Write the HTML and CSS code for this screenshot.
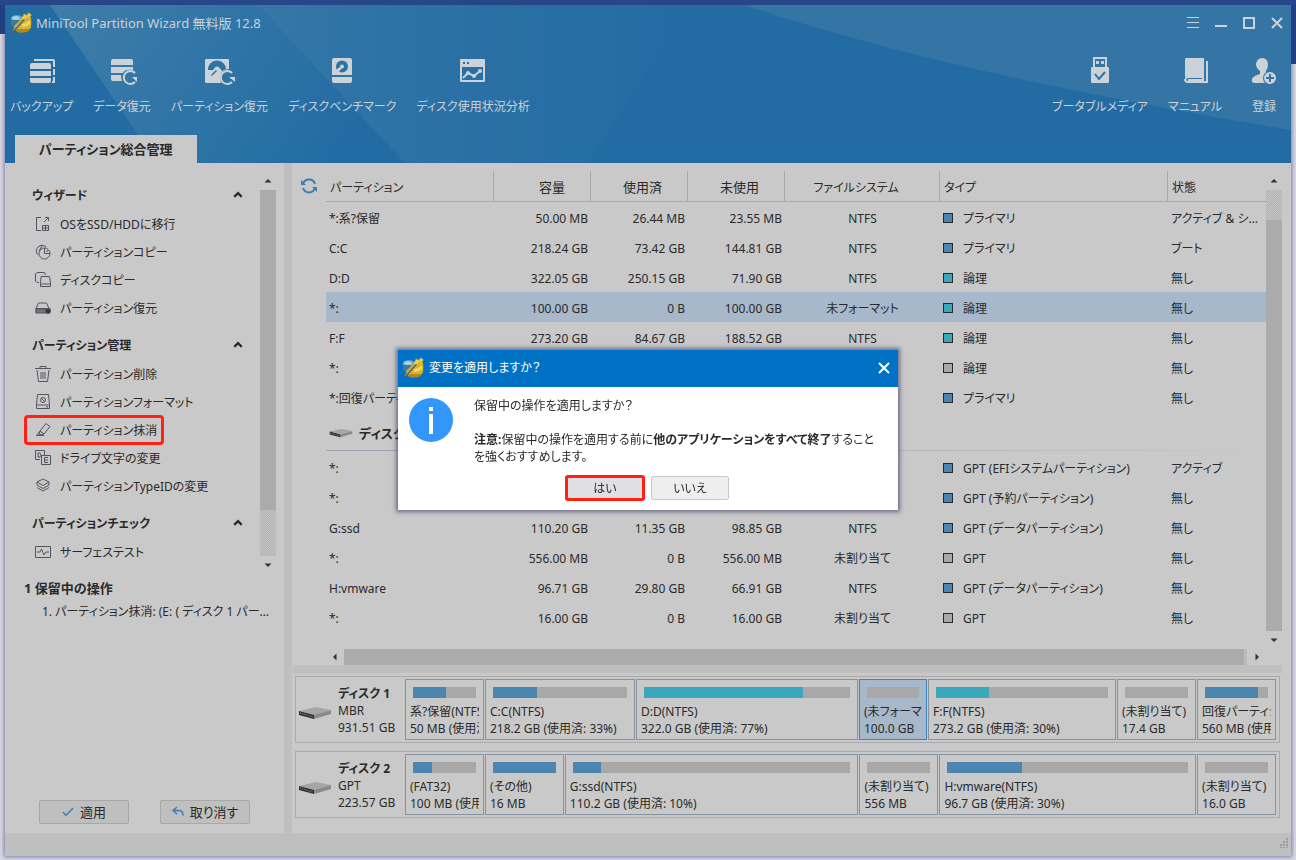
FILE: index.html
```html
<!DOCTYPE html>
<html lang="ja">
<head>
<meta charset="utf-8">
<title>MiniTool Partition Wizard</title>
<link rel="stylesheet" href="styles.css">
</head>
<body>
<svg class="defs" aria-hidden="true">
  <defs>
    <symbol id="app" viewBox="0 0 22 22">
      <ellipse cx="7" cy="7" rx="6.500" ry="4" fill="#4f9fc4"/><ellipse cx="6" cy="6" rx="4" ry="2" fill="#a5d2e4"/>
      <path d="M1 8v5q3 4 8 3V8z" fill="#3f7890"/>
      <path d="M4 14q4-3 8-9l3-2h5q2 5 1 12-1 4-8 4-6 1-8-1z" fill="#d9b12a"/>
      <path d="M12 12q5-1 8-4v4q-3 3-8 3z" fill="#f0d765"/><path d="M6 17h13v2q-6 3-12 1z" fill="#b28b17"/>
      <path d="M2 20.500 16 5" stroke="#515c60" stroke-width="2"/><path d="M3 18.500 15 5" stroke="#c3cdd2" stroke-width=".8"/>
      <path d="m14 1 1 2 2-1-1 2 2 1-2 1v2l-2-1-2 1 1-2-2-1h2zM19 0l1 2 2 1-2 1-1 2-1-2-1-1 1-1z" fill="#f2ce48"/>
    </symbol>
    <symbol id="drive" viewBox="0 0 34 14">
      <path d="M1 5 18 1l15 3-17 5z" fill="#a6a6a6"/><path d="m16 9 17-5v4l-17 5z" fill="#8a8a8a"/>
      <path d="M1 5v4l15 4V9z" fill="#2c2c30"/><path d="m2 7 13 4" stroke="#8f7a7a" stroke-width="1.500" stroke-dasharray="1 1"/>
    </symbol>
    <symbol id="up" viewBox="0 0 8 5"><path d="m.5 4.500 3.500-3.500 3.500 3.500z" fill="#333"/></symbol>
    <symbol id="down" viewBox="0 0 8 5"><path d="m.5.5 3.500 3.500 3.500-3.500z" fill="#333"/></symbol>
    <symbol id="left" viewBox="0 0 5 8"><path d="M4.500.500 1 4l3.500 3.500z" fill="#333"/></symbol>
    <symbol id="right" viewBox="0 0 5 8"><path d="m.5.5 3.500 3.500L.500 7.500z" fill="#333"/></symbol>
    <symbol id="fold" viewBox="0 0 8 6"><path d="m1 4.500 3-3 3 3" fill="none" stroke="#2a2a2a" stroke-width="1.800"/></symbol>
  </defs>
</svg>

<div class="window">
  <header class="banner">
    <svg class="facets" viewBox="0 0 1286 158" preserveAspectRatio="none" aria-hidden="true">
      <defs>
        <linearGradient id="g1" x1="0" x2="1" y1="0" y2=".3"><stop offset="0" stop-color="#3f7da9"/><stop offset=".6" stop-color="#2d73a6"/><stop offset="1" stop-color="#236ca3"/></linearGradient>
        <linearGradient id="g2"><stop offset="0" stop-color="#3477a7"/><stop offset=".5" stop-color="#2a70a5"/><stop offset="1" stop-color="#236ca3"/></linearGradient>
      </defs>
      <path d="M45 0h208l147 158H152z" fill="url(#g1)"/>
      <path d="M253 0h430l-100 158H400z" fill="url(#g2)"/>
      <path d="M740 0q200 68 546 125V0z" fill="#3475a6"/>
    </svg>
    <div class="titlebar">
      <svg class="app-icon"><use href="#app"/></svg>
      <h1>MiniTool Partition Wizard 無料版 12.8</h1>
      <div class="window-buttons">
        <button aria-label="メニュー"><svg viewBox="0 0 12 12"><path d="M0 .5h12M0 5.500h12M0 10.500h12" stroke="currentColor"/></svg></button>
        <button aria-label="最小化"><svg viewBox="0 0 12 12"><path d="M0 9h12" stroke="currentColor" stroke-width="2"/></svg></button>
        <button aria-label="最大化"><svg viewBox="0 0 12 12"><path d="M1 1h10v10H1z" fill="none" stroke="currentColor" stroke-width="2"/></svg></button>
        <button aria-label="閉じる"><svg viewBox="0 0 12 12"><path d="m1 1 10 10M11 1 1 11" stroke="currentColor" stroke-width="2"/></svg></button>
      </div>
    </div>
    <div class="toolbar">
      <button><svg viewBox="0 0 28 28"><path d="M4 6h17q2 0 2 2v4H2V8q0-2 2-2zM2 14h21v5H2zm0 7h21v3q0 2-2 2H4q-2 0-2-2z"/><path d="M6 3h19q1 0 1 1v6M26 12v6M26 20v5h-2" fill="none" stroke="currentColor" stroke-width="2"/></svg><span>バックアップ</span></button>
      <button><svg viewBox="0 0 28 28"><path d="M3 4q0-2 2-2h18q2 0 2 2v4H3zm0 6h22v3q-8-1-10 3H3zm0 8h10q0 3 1 6H5q-2 0-2-2z"/><path d="M27 16a6.500 6.500 0 1 0 0 9" fill="none" stroke="currentColor" stroke-width="2"/><path d="M24 20h5v5z"/></svg><span>データ復元</span></button>
      <button><svg viewBox="0 0 28 28"><path d="M1 2h22q1 0 1 1v9q-8 1-9 7l1 7H1q-1 0-1-1V3q0-1 1-1z"/><path d="M3 13a9 9 0 0 1 18-1l-4 2a5 5 0 0 0-9-1z" fill="#2d73a6"/><circle cx="12" cy="12" r="2.500"/><path d="m12 14-5 5-1-1 5-5z" fill="#2d73a6"/><path d="M27 16a6.500 6.500 0 1 0 0 9" fill="none" stroke="currentColor" stroke-width="2"/><path d="M24 20h6v5z"/></svg><span>パーティション復元</span></button>
      <button><svg viewBox="0 0 28 28"><path d="M6 1h16q2 0 2 2v15H4V3q0-2 2-2zM4 20h20v4q0 2-2 2H6q-2 0-2-2z"/><circle cx="14" cy="9.500" r="6" fill="#2a71a6"/><circle cx="14" cy="9.500" r="2"/><path d="m13 9-6 5 2 3 5-6z"/></svg><span>ディスクベンチマーク</span></button>
      <button><svg viewBox="0 0 28 28"><path fill-rule="evenodd" d="M2 2h23q1 0 1 1v21q0 1-1 1H2q-1 0-1-1V3q0-1 1-1zm2 3v2h2V5zm4 0v2h2V5zM3 10v13h21V10z"/><path d="m4 21 5-5 6 3 6-5" fill="none" stroke="currentColor" stroke-width="2"/><circle cx="9" cy="16" r="2"/><circle cx="15" cy="19" r="2"/><circle cx="21" cy="14" r="2"/></svg><span>ディスク使用状況分析</span></button>
      <div class="spacer"></div>
      <button><svg viewBox="0 0 28 28"><path fill-rule="evenodd" d="M7 0h14v10h1q1 0 1 1v14q0 1-1 1H6q-1 0-1-1V11q0-1 1-1h1zm2 2v8h10V2z"/><path d="M10 4h3v3h-3zm5 0h3v3h-3z"/><path d="m9 17 4 5 6-7" fill="none" stroke="#2e73a6" stroke-width="2"/></svg><span>ブータブルメディア</span></button>
      <button><svg viewBox="0 0 28 28"><path d="M5 1h18v18H7q-3 0-3 3V3q0-2 1-2z"/><path d="M5 22q0-2 2-2h15v3H7M26 4v21H7q-3 0-3-3" fill="none" stroke="currentColor" stroke-width="2"/></svg><span>マニュアル</span></button>
      <button class="register"><svg viewBox="0 0 28 28"><path d="M12 1q6 0 6 7 0 3-2 6v3q-2 6 2 9H4q-3-1-2-4 1-3 8-5v-3q-4-3-4-7 1-6 6-6z"/><circle cx="20" cy="21" r="7" fill="#3475a6"/><path fill-rule="evenodd" d="M20 15a6 6 0 1 1 0 12 6 6 0 0 1 0-12zm-1 2v3h-3v2h3v3h2v-3h3v-2h-3v-3z"/></svg><span>登録</span></button>
    </div>
    <div class="tabs"><button class="tab">パーティション総合管理</button></div>
  </header>

  <div class="workspace">
    <aside class="sidebar">
      <div class="actions">
        <nav class="groups">
          <section>
            <h2>ウィザード <svg><use href="#fold"/></svg></h2>
            <button class="action"><svg viewBox="0 0 16 16"><path d="M6 1.500H1.500v13H6M9 6l4-4M10 1.500h3.500V5M7.500 9.500h6v5h-6zM7.500 12h6M10.500 9.500v5"/></svg>OSをSSD/HDDに移行</button>
            <button class="action"><svg viewBox="0 0 16 16"><circle cx="9.500" cy="9.500" r="5.500"/><path d="M9.500 4v5.500H15M3 11a5 5 0 1 1 8-8M4 7l3-5M11 7h2"/></svg>パーティションコピー</button>
            <button class="action"><svg viewBox="0 0 16 16"><path d="M4 10.500H2L.500 9V2L2 .500h7.500L10.500 3M6 4.500h8.500L15.500 11v3.500h-10v-3zM6 12h9"/></svg>ディスクコピー</button>
            <button class="action"><svg viewBox="0 0 16 16"><path d="M1 8.500 3.500 3h8L14 8.500M1 8.500h14v4H1z"/><path d="M1 9h13v4H1z" fill="#777"/><circle cx="13" cy="11" r="2.500" fill="#333"/></svg>パーティション復元</button>
          </section>
          <section>
            <h2>パーティション管理 <svg><use href="#fold"/></svg></h2>
            <button class="action"><svg viewBox="0 0 16 16"><path d="M0 2.500h16M5 2V.500h6V2M2 4l1.500 11.500h9L14 4M6 6v7M8 6v7M10 6v7"/></svg>パーティション削除</button>
            <button class="action"><svg viewBox="0 0 16 16"><path d="M2.500.500h11l1 10v4h-13v-4zM1.500 11h13M11 13h2"/><circle cx="8" cy="6" r="2.500"/><path d="m6 4 4 4"/></svg>パーティションフォーマット</button>
            <button class="action marked"><svg viewBox="0 0 16 16"><path d="M5 9 11 1.500l4 3L9 12l-5 1zM1 13.500h8M5 9l4 3M2 13l3-4"/></svg>パーティション抹消</button>
            <button class="action"><svg viewBox="0 0 16 16"><path d="M5 9.500H.500v-9h9V5M3 3v4h2q2-2 0-4zM6.500 5.500h9v9h-9zM13 7.500H9.500v5H13M9.500 10H13"/></svg>ドライブ文字の変更</button>
            <button class="action"><svg viewBox="0 0 16 16"><path d="m8 1 6 3-6 3.500L2 4zM2 7l6 3.500L14 7M2 9.500 8 13l6-3.500M2 4v3M14 4v3"/></svg>パーティションTypeIDの変更</button>
          </section>
          <section>
            <h2>パーティションチェック <svg><use href="#fold"/></svg></h2>
            <button class="action"><svg viewBox="0 0 16 16"><path d="M.500 2.500h15v11H.500zM2 8h3l1.500-3L9 11l2-3h3"/></svg>サーフェステスト</button>
          </section>
        </nav>
        <div class="vscroll" aria-hidden="true">
          <svg><use href="#up"/></svg>
          <i class="thumb nav-thumb"></i><i class="trough nav-rest"></i>
          <svg><use href="#down"/></svg>
        </div>
      </div>
      <section class="pending">
        <h2>1 保留中の操作</h2>
        <ol><li>1. パーティション抹消: (E: ( ディスク 1 パーティション 4 )</li></ol>
      </section>
      <div class="commit">
        <button><svg viewBox="0 0 12 12"><path d="m1 6 3 3.500L11 2"/></svg>適用</button>
        <button><svg viewBox="0 0 12 12"><path d="M5 1 1 4.500 5 8M1 4.500h6q4 0 4 5"/></svg>取り消す</button>
      </div>
    </aside>

    <main class="content">
      <div class="listing">
        <button class="refresh" aria-label="更新"><svg viewBox="0 0 16 16"><path d="M2 6a6.300 6.300 0 0 1 12 0M14 10a6.300 6.300 0 0 1-12 0" fill="none" stroke="#3a7fb0" stroke-width="2"/><path d="M0 2v5h5zM16 14V9h-5z" fill="#3a7fb0"/></svg></button>
        <div class="table-wrap">
        <table>
          <colgroup><col class="c-name"><col class="c-num"><col class="c-num"><col class="c-num"><col class="c-fs"><col><col class="c-state"></colgroup>
          <thead><tr><th>パーティション</th><th class="num">容量</th><th class="num">使用済</th><th class="num">未使用</th><th class="fs-head">ファイルシステム</th><th>タイプ</th><th>状態</th></tr></thead>
          <tbody>
            <tr><td>*:系?保留</td><td>50.00 MB</td><td>26.44 MB</td><td>23.55 MB</td><td>NTFS</td><td><i class="sq blue"></i>プライマリ</td><td>アクティブ &amp; システム</td></tr>
            <tr><td>C:C</td><td>218.24 GB</td><td>73.42 GB</td><td>144.81 GB</td><td>NTFS</td><td><i class="sq blue"></i>プライマリ</td><td>ブート</td></tr>
            <tr><td>D:D</td><td>322.05 GB</td><td>250.15 GB</td><td>71.90 GB</td><td>NTFS</td><td><i class="sq teal"></i>論理</td><td>無し</td></tr>
            <tr class="selected"><td>*:</td><td>100.00 GB</td><td>0 B</td><td>100.00 GB</td><td>未フォーマット</td><td><i class="sq teal"></i>論理</td><td>無し</td></tr>
            <tr><td>F:F</td><td>273.20 GB</td><td>84.67 GB</td><td>188.52 GB</td><td>NTFS</td><td><i class="sq teal"></i>論理</td><td>無し</td></tr>
            <tr><td>*:</td><td></td><td></td><td></td><td></td><td><i class="sq gray"></i>論理</td><td>無し</td></tr>
            <tr><td>*:回復パーティション</td><td></td><td></td><td></td><td></td><td><i class="sq blue"></i>プライマリ</td><td>無し</td></tr>
            <tr class="disk-row"><th colspan="7" scope="rowgroup"><div><svg><use href="#drive"/></svg>ディスク 2</div></th></tr>
            <tr><td>*:</td><td></td><td></td><td></td><td></td><td><i class="sq blue"></i>GPT (EFIシステムパーティション)</td><td>アクティブ</td></tr>
            <tr><td>*:</td><td></td><td></td><td></td><td></td><td><i class="sq blue"></i>GPT (予約パーティション)</td><td>無し</td></tr>
            <tr><td>G:ssd</td><td>110.20 GB</td><td>11.35 GB</td><td>98.85 GB</td><td>NTFS</td><td><i class="sq blue"></i>GPT (データパーティション)</td><td>無し</td></tr>
            <tr><td>*:</td><td>556.00 MB</td><td>0 B</td><td>556.00 MB</td><td>未割り当て</td><td><i class="sq gray"></i>GPT</td><td>無し</td></tr>
            <tr><td>H:vmware</td><td>96.71 GB</td><td>29.80 GB</td><td>66.91 GB</td><td>NTFS</td><td><i class="sq blue"></i>GPT (データパーティション)</td><td>無し</td></tr>
            <tr><td>*:</td><td>16.00 GB</td><td>0 B</td><td>16.00 GB</td><td>未割り当て</td><td><i class="sq gray"></i>GPT</td><td>無し</td></tr>
          </tbody>
        </table>
        </div>
        <div class="vscroll" aria-hidden="true">
          <svg><use href="#up"/></svg>
          <i class="trough list-rest"></i><i class="thumb list-thumb"></i>
          <svg><use href="#down"/></svg>
        </div>
      </div>
      <div class="hscroll" aria-hidden="true">
        <svg><use href="#left"/></svg><i class="thumb"></i><i class="trough"></i><svg><use href="#right"/></svg>
      </div>
      <div class="divider"></div>
      <div class="maps">
        <section class="disk">
          <svg><use href="#drive"/></svg>
          <div class="disk-info"><h3>ディスク 1</h3><p>MBR</p><p>931.51 GB</p></div>
          <div class="parts">
            <div class="part" style="flex-grow:69"><div class="bar"><i class="blue" style="width:52%"></i></div><p>系?保留(NTFS)</p><p>50 MB (使用済: 52%)</p></div>
            <div class="part" style="flex-grow:140"><div class="bar"><i class="blue" style="width:33%"></i></div><p>C:C(NTFS)</p><p>218.2 GB (使用済: 33%)</p></div>
            <div class="part" style="flex-grow:212"><div class="bar"><i class="teal" style="width:77%"></i></div><p>D:D(NTFS)</p><p>322.0 GB (使用済: 77%)</p></div>
            <div class="part current" style="flex-grow:58"><div class="bar"></div><p>(未フォーマット)</p><p>100.0 GB</p></div>
            <div class="part" style="flex-grow:178"><div class="bar"><i class="teal" style="width:31%"></i></div><p>F:F(NTFS)</p><p>273.2 GB (使用済: 30%)</p></div>
            <div class="part" style="flex-grow:69"><div class="bar"></div><p>(未割り当て)</p><p>17.4 GB</p></div>
            <div class="part" style="flex-grow:69"><div class="bar"><i class="blue" style="width:84%"></i></div><p>回復パーティション</p><p>560 MB (使用済: 84%)</p></div>
          </div>
        </section>
        <section class="disk">
          <svg><use href="#drive"/></svg>
          <div class="disk-info"><h3>ディスク 2</h3><p>GPT</p><p>223.57 GB</p></div>
          <div class="parts">
            <div class="part" style="flex-grow:69"><div class="bar"><i class="blue" style="width:30%"></i></div><p>(FAT32)</p><p>100 MB (使用済: 30%)</p></div>
            <div class="part" style="flex-grow:69"><div class="bar"><i class="blue" style="width:100%"></i></div><p>(その他)</p><p>16 MB</p></div>
            <div class="part" style="flex-grow:284"><div class="bar"><i class="blue" style="width:10%"></i></div><p>G:ssd(NTFS)</p><p>110.2 GB (使用済: 10%)</p></div>
            <div class="part" style="flex-grow:69"><div class="bar"></div><p>(未割り当て)</p><p>556 MB</p></div>
            <div class="part" style="flex-grow:247"><div class="bar"><i class="blue" style="width:31%"></i></div><p>H:vmware(NTFS)</p><p>96.7 GB (使用済: 30%)</p></div>
            <div class="part" style="flex-grow:69"><div class="bar"></div><p>(未割り当て)</p><p>16.0 GB</p></div>
          </div>
        </section>
      </div>
    </main>
  </div>
  <footer class="status"><svg viewBox="0 0 10 10" aria-hidden="true"><path d="M8 0h2v2H8zM8 3h2v2H8zM5 3h2v2H5zM8 6h2v2H8zM5 6h2v2H5zM2 6h2v2H2zM8 9h2v1H8zM5 9h2v1H5zM2 9h2v1H2z" fill="#9a9aa4"/></svg></footer>
</div>

<dialog open aria-labelledby="dialog-title">
  <div class="dialog-head">
    <svg class="app-icon"><use href="#app"/></svg>
    <h2 id="dialog-title">変更を適用しますか？</h2>
    <button aria-label="閉じる"><svg viewBox="0 0 12 12"><path d="m1 1 10 10M11 1 1 11" stroke="currentColor" stroke-width="2"/></svg></button>
  </div>
  <div class="dialog-body">
    <svg class="info" viewBox="0 0 44 44"><circle cx="22" cy="22" r="22" fill="#3296fa"/><path d="M20 9h4v4h-4zM20 16h4v20h-4z" fill="#fff"/></svg>
    <div class="message">
      <p>保留中の操作を適用しますか？</p>
      <p><b>注意:</b>保留中の操作を適用する前に<b>他のアプリケーションをすべて終了</b>すること<br>を強くおすすめします。</p>
    </div>
  </div>
  <div class="dialog-buttons"><button class="yes">はい</button><button>いいえ</button></div>
</dialog>
</body>
</html>
```
FILE: styles.css
```css
* { box-sizing: border-box; }

body {
  margin: 0;
  padding: 5px;
  min-height: 100vh;
  display: flex;
  background: linear-gradient(#24498a 0 5px, transparent 5px), linear-gradient(90deg, transparent 50%, #1f4084 50%) 0 0 / 100% 64px no-repeat, linear-gradient(#1f4084 34px, #d8d8e2 34px);
  font: 12px/17px "Noto Sans", "Noto Sans CJK JP", sans-serif;
  font-feature-settings: "palt";
  color: #2a2a2a;
}

h1, h2, h3, p, ol { margin: 0; padding: 0; font-size: inherit; list-style: none; }
button { border: 0; padding: 0; background: none; color: inherit; font: inherit; font-feature-settings: inherit; }
svg { display: block; flex: none; }
.defs { position: absolute; width: 0; height: 0; }
.blue { background: #4b86b0; }
.teal { background: #3ba7bb; }
.gray { background: #a8a8a8; }
.app-icon { width: 22px; height: 22px; }

.window {
  flex: 1;
  min-width: 0;
  display: flex;
  flex-direction: column;
  background: #c9c9c9;
  box-shadow: 0 0 4px 1px rgba(60, 60, 130, .6);
}

/* Banner */
.banner {
  position: relative;
  display: flex;
  flex-direction: column;
  height: 158px;
  background: #236ca3;
  color: #cbd2d8;
}
.facets { position: absolute; inset: 0; width: 100%; height: 100%; }
.banner > div { position: relative; }
.titlebar { display: flex; align-items: center; gap: 4px; height: 36px; padding: 0 8px 0 5px; }
.titlebar h1 { flex: 1; font-size: 13px; font-weight: 400; }
.window-buttons { display: flex; gap: 16px; }
.window-buttons svg { width: 12px; height: 12px; }
.toolbar { display: flex; gap: 20px; padding: 16px 13px 0 5px; }
.toolbar button { display: flex; flex-direction: column; align-items: center; gap: 13px; }
.toolbar .register { margin-left: 8px; }
.toolbar svg { width: 28px; height: 28px; fill: currentColor; overflow: visible; }
.spacer { flex: 1; }
.tabs { display: flex; margin-top: auto; padding-left: 10px; }
.tab { height: 28px; padding: 0 24px; background: #c9c9c9; color: #2a2a2a; font-size: 13px; font-weight: 700; }

/* Layout */
.workspace { flex: 1; display: flex; min-height: 0; }
.sidebar { display: flex; flex-direction: column; width: 287px; flex: none; border-right: 8px solid #bfbfbf; }
.content { flex: 1; min-width: 0; }
.status { height: 23px; padding: 8px 3px; background: #bfbfbf; display: flex; justify-content: flex-end; align-items: flex-end; }
.status svg { width: 10px; height: 10px; }

/* Scrollbars */
.vscroll { display: flex; flex-direction: column; align-items: center; width: 16px; padding: 15px 0 6px; }
.vscroll svg { width: 8px; height: 5px; }
.vscroll svg:first-child { margin-bottom: 7px; }
.vscroll svg:last-child { margin-top: 7px; }
.vscroll i { width: 16px; }
.thumb { background: #ababab; }
.trough { background: repeating-conic-gradient(#b2b2b2 0 25%, #c4c4c4 0 50%) 0 0 / 2px 2px; }
.nav-thumb, .list-thumb { flex: 1; }
.nav-rest { height: 46px; }
.list-rest { height: 30px; }
.hscroll { display: flex; align-items: center; gap: 0; height: 16px; margin: 0 31px 0 40px; }
.hscroll svg { width: 5px; height: 8px; }
.hscroll i { height: 16px; }
.hscroll .thumb { flex: 1; margin-left: 7px; }
.hscroll .trough { width: 3px; margin-right: 8px; }

/* Sidebar */
.actions { display: flex; }
.groups { flex: 1; padding-top: 17px; }
.groups section { margin-bottom: 8px; }
.groups h2 { display: flex; align-items: center; justify-content: space-between; height: 30px; padding: 0 17px 0 27px; }
.groups h2 svg { width: 10px; height: 8px; }
.groups + .vscroll { margin-right: 8px; }
.action { display: flex; align-items: center; gap: 9px; height: 28px; margin-left: 20px; padding: 0 6px 0 10px; }
.action svg { width: 16px; height: 16px; fill: none; stroke: #55555f; }
.marked { outline: 3px solid #ff2212; outline-offset: -2px; border-radius: 3px; }
.pending { padding: 2px 8px 0 19px; line-height: 24px; }
.pending h2 { font-size: 13px; }
.pending li { width: 230px; margin-left: 18px; overflow: hidden; white-space: nowrap; text-overflow: ellipsis; }
.commit { display: flex; gap: 31px; margin-top: auto; padding: 0 34px 9px; }
.commit button { flex: 1; display: flex; align-items: center; justify-content: center; gap: 6px; height: 24px; border: 1px solid #a8a8a8; border-radius: 2px; background: #bfbfbf; font-size: 13px; }
.commit svg { width: 12px; height: 12px; fill: none; stroke: #3a7fb0; stroke-width: 1.5; }

/* Partition list */
.listing { display: flex; padding-right: 9px; }
.refresh { align-self: flex-start; padding: 15px 9px 0; }
.refresh svg { width: 16px; height: 16px; }
.table-wrap { flex: 1; min-width: 0; padding: 8px 0 17px; }
table { width: 100%; table-layout: fixed; border-collapse: separate; border-spacing: 0; }
.c-name { width: 168px; }
.c-num { width: 97px; }
.c-fs { width: 155px; }
.c-state { width: 98px; }
thead th { height: 31px; padding: 2px 4px 0; border-right: 1px solid #a8a8a8; border-bottom: 1px solid #a8a8a8; text-align: left; font-weight: 400; }
thead th:last-child { border-right: 0; }
thead .num { padding-right: 25px; text-align: right; font-size: 13px; }
thead .fs-head { text-align: center; padding-right: 16px; }
td { height: 30px; padding: 2px 3px 0; overflow: hidden; white-space: nowrap; text-overflow: ellipsis; }
td:nth-child(2), td:nth-child(3), td:nth-child(4) { text-align: right; }
td:nth-child(5) { text-align: center; }
td:last-child { padding-right: 8px; }
.selected { background: #a6b8ca; }
.sq { display: inline-block; width: 10px; height: 10px; margin-right: 10px; border: 1px solid #2a2a2a; vertical-align: 0; }
.disk-row th { padding: 2px 0 0; height: 40px; text-align: left; font-size: 13px; background: linear-gradient(90deg, #a3a3b3 30%, #c9c9c9) 0 38px / 100% 1px no-repeat; }
.disk-row div { display: flex; align-items: center; gap: 6px; padding-left: 3px; }
.disk-row svg { width: 24px; height: 12px; }

/* Disk maps */
.divider { height: 8px; margin: 0 9px 3px 1px; background: #bfbfbf; }
.maps { display: flex; flex-direction: column; gap: 8px; padding: 0 11px 15px 3px; }
.disk { display: flex; align-items: center; padding: 2px 3px 2px 2px; border: 1px solid #aaaab4; }
.disk > svg { width: 34px; height: 14px; margin-top: 6px; }
.disk-info { width: 73px; padding: 2px 0 0 6px; white-space: nowrap; }
.parts { flex: 1; min-width: 0; display: flex; gap: 1px; }
.part { flex: 1 1 0; min-width: 0; padding: 7px 4px 2px; border: 1px solid #8592a0; overflow: hidden; }
.part p { overflow: hidden; white-space: nowrap; }
.current { background: #a6b8ca; border-color: #3d85bb; }
.bar { display: flex; height: 11px; margin: 0 3px 5px; background: #a8a8a8; }

/* Dialog */
dialog {
  position: fixed;
  inset: 0;
  width: 500px;
  max-width: 100%;
  margin: auto;
  padding: 0;
  border: 0;
  background: #fff;
  color: #2a2a2a;
  box-shadow: 0 0 4px 2px rgba(60, 60, 110, .65);
}
.dialog-head { display: flex; align-items: center; gap: 5px; height: 37px; padding: 0 8px 2px 4px; background: #0072c6; color: #fff; }
.dialog-head h2 { flex: 1; font-weight: 400; }
.dialog-head button svg { width: 12px; height: 12px; }
.dialog-body { display: flex; gap: 21px; padding: 10px 8px 0 11px; }
.info { width: 44px; height: 44px; margin-top: 1px; }
.message p { margin-bottom: 17px; }
.message p:last-child { margin-bottom: 10px; }
.dialog-buttons { display: flex; align-items: center; justify-content: center; gap: 6px; padding: 0 2px 9px 0; }
.dialog-buttons button { width: 78px; height: 24px; border: 1px solid #c8c8cc; border-radius: 2px; background: #eee; }
.dialog-buttons .yes { width: 80px; height: 26px; background: #e0e0e4; border: 3px solid #ff2212; border-radius: 3px; }
```
